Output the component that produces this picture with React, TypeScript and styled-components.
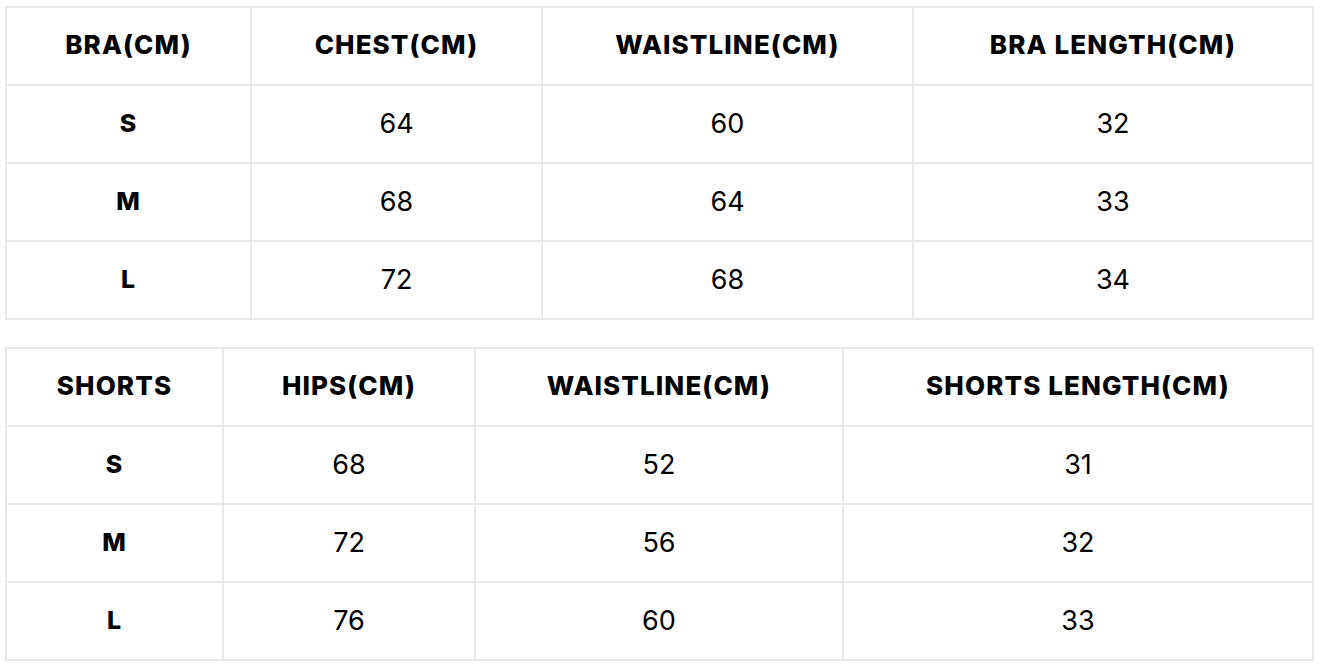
import React from "react";
import styled, { createGlobalStyle } from "styled-components";

const Global = createGlobalStyle`
  html, body { margin: 0; padding: 0; background: #ffffff; }
  body { font-family: Inter, "Noto Sans", sans-serif; color: #000; }
`;

const Page = styled.div`
  display: flex;
  flex-direction: column;
  gap: 27px;
  padding: 6px 6px 0 5px;
`;

const Table = styled.table`
  width: 1309px;
  border-collapse: collapse;
  table-layout: fixed;
`;

const Row = styled.tr`
  height: 78px;
`;

const Cell = styled.td<{ $bold?: boolean }>`
  border: 2px solid #e8e8e8;
  text-align: center;
  vertical-align: middle;
  padding: 0 0 2px;
  font-size: ${(p) => (p.$bold ? 25 : 27)}px;
  line-height: 1;
  font-weight: ${(p) => (p.$bold ? 800 : 400)};
  letter-spacing: ${(p) => (p.$bold ? 1 : 0)}px;
  color: #000;
`;

const Head = styled.th`
  border: 2px solid #e8e8e8;
  text-align: center;
  vertical-align: middle;
  padding: 0 0 2px;
  font-size: 26px;
  line-height: 1;
  font-weight: 800;
  letter-spacing: 1.1px;
  text-transform: uppercase;
  color: #000;
`;

type TableData = {
  widths: number[];
  head: string[];
  rows: string[][];
};

const tables: TableData[] = [
  {
    widths: [245, 291, 371, 400],
    head: ["BRA(CM)", "CHEST(CM)", "WAISTLINE(CM)", "BRA LENGTH(CM)"],
    rows: [
      ["S", "64", "60", "32"],
      ["M", "68", "64", "33"],
      ["L", "72", "68", "34"],
    ],
  },
  {
    widths: [217, 252, 368, 470],
    head: ["SHORTS", "HIPS(CM)", "WAISTLINE(CM)", "SHORTS LENGTH(CM)"],
    rows: [
      ["S", "68", "52", "31"],
      ["M", "72", "56", "32"],
      ["L", "76", "60", "33"],
    ],
  },
];

function SizeTable({ data }: { data: TableData }) {
  return (
    <Table>
      <colgroup>
        {data.widths.map((w, i) => (
          <col key={i} style={{ width: w }} />
        ))}
      </colgroup>
      <thead>
        <Row>
          {data.head.map((h) => (
            <Head key={h}>{h}</Head>
          ))}
        </Row>
      </thead>
      <tbody>
        {data.rows.map((r) => (
          <Row key={r[0]}>
            {r.map((c, i) => (
              <Cell key={i} $bold={i === 0}>
                {c}
              </Cell>
            ))}
          </Row>
        ))}
      </tbody>
    </Table>
  );
}

export default function App() {
  return (
    <>
      <Global />
      <Page>
        {tables.map((t, i) => (
          <SizeTable key={i} data={t} />
        ))}
      </Page>
    </>
  );
}
